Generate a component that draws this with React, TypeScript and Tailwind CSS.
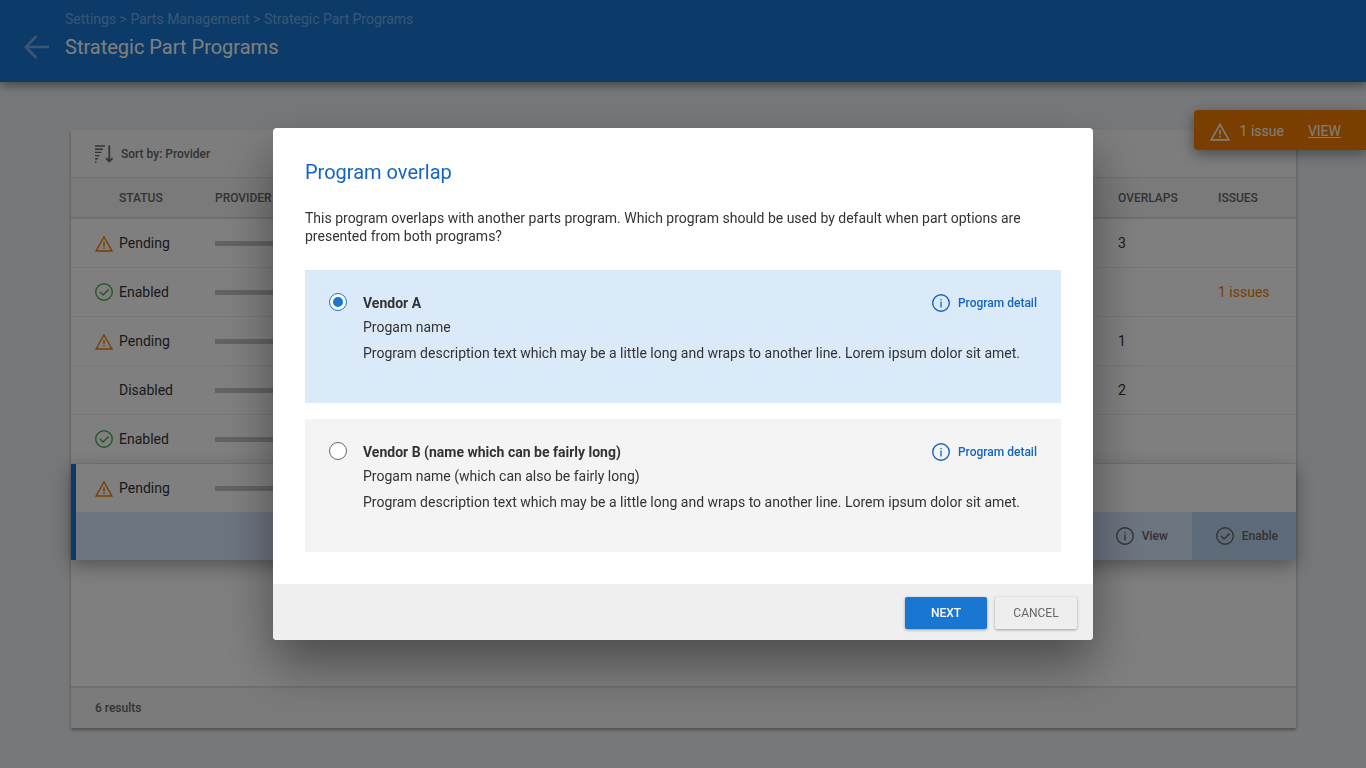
import React, { useState } from "react";

type Status = "Pending" | "Enabled" | "Disabled";

type Program = {
  id: number;
  status: Status;
  overlaps?: number;
  issues?: number;
};

type Vendor = {
  id: string;
  name: string;
  program: string;
};

const programs: Program[] = [
  { id: 1, status: "Pending", overlaps: 3 },
  { id: 2, status: "Enabled", issues: 1 },
  { id: 3, status: "Pending", overlaps: 1 },
  { id: 4, status: "Disabled", overlaps: 2 },
  { id: 5, status: "Enabled" },
];

const selectedProgram: Program = { id: 6, status: "Pending" };

const vendors: Vendor[] = [
  { id: "vendor-a", name: "Vendor A", program: "Progam name" },
  {
    id: "vendor-b",
    name: "Vendor B (name which can be fairly long)",
    program: "Progam name (which can also be fairly long)",
  },
];

const WarningIcon = ({ className }: { className?: string }) => (
  <svg viewBox="0 0 18 18" fill="none" stroke="currentColor" className={className}>
    <path d="M9 3 16.9 17H1.1Z" strokeWidth="1.4" />
    <path d="M9 8v4.2M9 13.2v1.6" strokeWidth="1.5" />
  </svg>
);

const CheckIcon = ({ className }: { className?: string }) => (
  <svg viewBox="0 0 18 18" fill="none" stroke="currentColor" className={className}>
    <circle cx="9" cy="9" r="8.3" strokeWidth="1.4" />
    <path d="m4.8 8.8 3.2 3.2 5.6-5.4" strokeWidth="1.5" />
  </svg>
);

const InfoIcon = ({ className }: { className?: string }) => (
  <svg viewBox="0 0 18 18" fill="none" stroke="currentColor" className={className}>
    <circle cx="9" cy="9" r="8.3" strokeWidth="1.4" />
    <path d="M9 7.6v6M9 5v1.3" strokeWidth="1.3" />
  </svg>
);

const SortIcon = () => (
  <svg viewBox="0 0 18 18" fill="none" stroke="currentColor" className="size-[18px]">
    <path
      d="M0 1h10M0 4.2h8M0 7.4h6.4M0 10.6h4.6M0 13.8h3M0 17h1.4"
      strokeWidth="1.4"
    />
    <path d="M14.3.4v16M11 13.2l3.3 3.4 3.3-3.4" strokeWidth="1.7" />
  </svg>
);

const StatusIcon = ({ status }: { status: Status }) => {
  if (status === "Pending") {
    return <WarningIcon className="size-[18px] text-[#f57c00]" />;
  }
  if (status === "Enabled") {
    return <CheckIcon className="size-[18px] text-[#4caf50]" />;
  }
  return null;
};

const ProgramRow = ({ program, selected }: { program: Program; selected?: boolean }) => {
  const border = selected ? "" : "border-b border-[#f0f0f0]";

  return (
    <tr className={selected ? "h-12 bg-white" : "h-[49px] bg-white"}>
      <td className={`p-0 ${border} ${selected ? "border-l-[5px] border-[#1976d2] pl-[19px]" : "pl-6"}`}>
        <div className="flex items-center gap-1.5">
          <span className="w-[18px]">
            <StatusIcon status={program.status} />
          </span>
          {program.status}
        </div>
      </td>
      <td className={`p-0 ${border}`}>
        <div className="h-[5px] w-3/4 bg-[#c4c4c4]" />
      </td>
      <td className={`p-0 ${border}`}>{program.overlaps}</td>
      <td className={`p-0 ${border}`}>
        {program.issues && (
          <a href="#issues" className="text-[#f57c00]">
            {program.issues} issues
          </a>
        )}
      </td>
    </tr>
  );
};

const ProgramsTable = () => (
  <table className="w-full table-fixed border-separate border-spacing-0 text-left text-sm text-[#333]">
    <colgroup>
      <col className="w-[144px]" />
      <col />
      <col className="w-[100px]" />
      <col className="w-[78px]" />
    </colgroup>
    <thead>
      <tr className="h-[41px] bg-[#f5f5f5] text-xs text-[#666]">
        <th className="border-b-2 border-[#dcdcdc] p-0 pl-12 font-medium">STATUS</th>
        <th className="border-b-2 border-[#dcdcdc] p-0 font-medium">PROVIDER</th>
        <th className="border-b-2 border-[#dcdcdc] p-0 font-medium">OVERLAPS</th>
        <th className="border-b-2 border-[#dcdcdc] p-0 font-medium">ISSUES</th>
      </tr>
    </thead>
    <tbody>
      {programs.map((program) => (
        <ProgramRow key={program.id} program={program} />
      ))}
    </tbody>
    <tbody className="relative shadow-[0_6px_18px_rgba(0,0,0,0.35)]">
      <ProgramRow program={selectedProgram} selected />
      <tr>
        <td colSpan={4} className="border-l-[5px] border-[#1976d2] bg-[#d9e8ff] p-0">
          <div className="flex h-12 justify-end text-xs font-medium text-[#666]">
            <button type="button" className="flex items-center gap-2 px-6">
              <InfoIcon className="size-[18px]" />
              View
            </button>
            <button type="button" className="flex items-center gap-2 bg-[#bbd6f0] pr-[18px] pl-6">
              <CheckIcon className="size-[18px]" />
              Enable
            </button>
          </div>
        </td>
      </tr>
    </tbody>
  </table>
);

const OverlapDialog = () => {
  const [selected, setSelected] = useState("vendor-a");

  return (
    <div
      role="dialog"
      aria-modal="true"
      aria-labelledby="overlap-title"
      className="w-full max-w-[820px] overflow-hidden rounded bg-white text-sm text-[#333] shadow-[0_24px_50px_rgba(0,0,0,0.4)]"
    >
      <form onSubmit={(event) => event.preventDefault()}>
        <div className="p-8">
          <h2 id="overlap-title" className="text-xl leading-6 text-[#1565c0]">
            Program overlap
          </h2>
          <p className="my-[25px] leading-[18px]">
            This program overlaps with another parts program. Which program should be used by
            default when part options are presented from both programs?
          </p>
          <div className="space-y-4">
            {vendors.map((vendor) => (
              <div
                key={vendor.id}
                className={`flex min-h-[133px] gap-4 px-6 pt-[21px] ${
                  selected === vendor.id ? "bg-[#daeaf9]" : "bg-[#f4f4f4]"
                }`}
              >
                <input
                  type="radio"
                  id={vendor.id}
                  name="vendor"
                  checked={selected === vendor.id}
                  onChange={() => setSelected(vendor.id)}
                  className="mt-0.5 grid size-[18px] shrink-0 appearance-none place-content-center rounded-full border border-[#666] bg-white checked:border-[#1976d2] checked:before:size-2.5 checked:before:rounded-full checked:before:bg-[#1976d2]"
                />
                <div className="flex-1 leading-6">
                  <div className="flex justify-between">
                    <label htmlFor={vendor.id} className="font-bold">
                      {vendor.name}
                    </label>
                    <a
                      href="#detail"
                      className="flex items-center gap-2 text-xs font-medium text-[#1565c0]"
                    >
                      <InfoIcon className="size-[18px]" />
                      Program detail
                    </a>
                  </div>
                  <p>{vendor.program}</p>
                  <p className="mt-0.5">
                    Program description text which may be a little long and wraps to another
                    line. Lorem ipsum dolor sit amet.
                  </p>
                </div>
              </div>
            ))}
          </div>
        </div>
        <div className="flex h-14 justify-end gap-2 bg-[#efefef] px-4 pt-[13px] text-xs">
          <button
            type="submit"
            className="h-8 w-[82px] rounded-xs bg-[#1976d2] font-medium text-white shadow-[0_1px_3px_rgba(0,0,0,0.35)]"
          >
            NEXT
          </button>
          <button
            type="button"
            className="h-8 w-[82px] rounded-xs bg-[#eee] text-[#666] shadow-[0_1px_3px_rgba(0,0,0,0.35)]"
          >
            CANCEL
          </button>
        </div>
      </form>
    </div>
  );
};

const App: React.FC = () => {
  return (
    <div className="relative flex min-h-screen flex-col bg-[#eef0f3] font-['Roboto',sans-serif]">
      <header className="flex h-[82px] gap-4 bg-[#1976d2] px-6 pt-2 text-white shadow-[0_3px_10px_rgba(0,0,0,0.45)]">
        <button type="button" aria-label="Back" className="mt-[27px] h-6 w-[25px] text-white/40">
          <svg viewBox="0 0 25 24" fill="none" stroke="currentColor" className="h-6 w-[25px]">
            <path d="M12.5 1 1.7 12l10.8 11M1.7 12H25" strokeWidth="2.6" />
          </svg>
        </button>
        <div>
          <nav className="text-sm leading-[22px] text-white/40">
            <a href="#settings">Settings</a> &gt; <a href="#parts">Parts Management</a> &gt;{" "}
            <a href="#programs">Strategic Part Programs</a>
          </nav>
          <h1 className="mt-1 text-xl leading-[26px]">Strategic Part Programs</h1>
        </div>
      </header>

      <main className="flex flex-1 flex-col pt-12 pr-[70px] pb-10 pl-[71px]">
        <section className="flex flex-1 flex-col bg-white shadow-[0_2px_3px_rgba(0,0,0,0.35)]">
          <div className="h-12 border-b border-[#e2e2e2] bg-[#fafafa] px-6">
            <button
              type="button"
              className="flex h-full items-center gap-2 text-xs font-medium text-[#666]"
            >
              <SortIcon />
              Sort by: Provider
            </button>
          </div>
          <ProgramsTable />
          <footer className="mt-auto flex h-[42px] items-center border-t-2 border-[#e0e0e0] bg-[#f5f5f5] px-6 text-xs font-medium text-[#666]">
            6 results
          </footer>
        </section>
      </main>

      <div className="absolute top-[110px] right-0 flex h-10 items-center rounded-l bg-[#f57c00] pt-px pr-[25px] pl-4 text-sm text-white shadow-[0_4px_14px_rgba(0,0,0,0.4)]">
        <WarningIcon className="size-5" />
        <span className="ml-2.5">1 issue</span>
        <a href="#issues" className="ml-6 underline">
          VIEW
        </a>
      </div>

      <div className="fixed inset-0 flex items-center justify-center bg-black/50">
        <OverlapDialog />
      </div>
    </div>
  );
};

export default App;
